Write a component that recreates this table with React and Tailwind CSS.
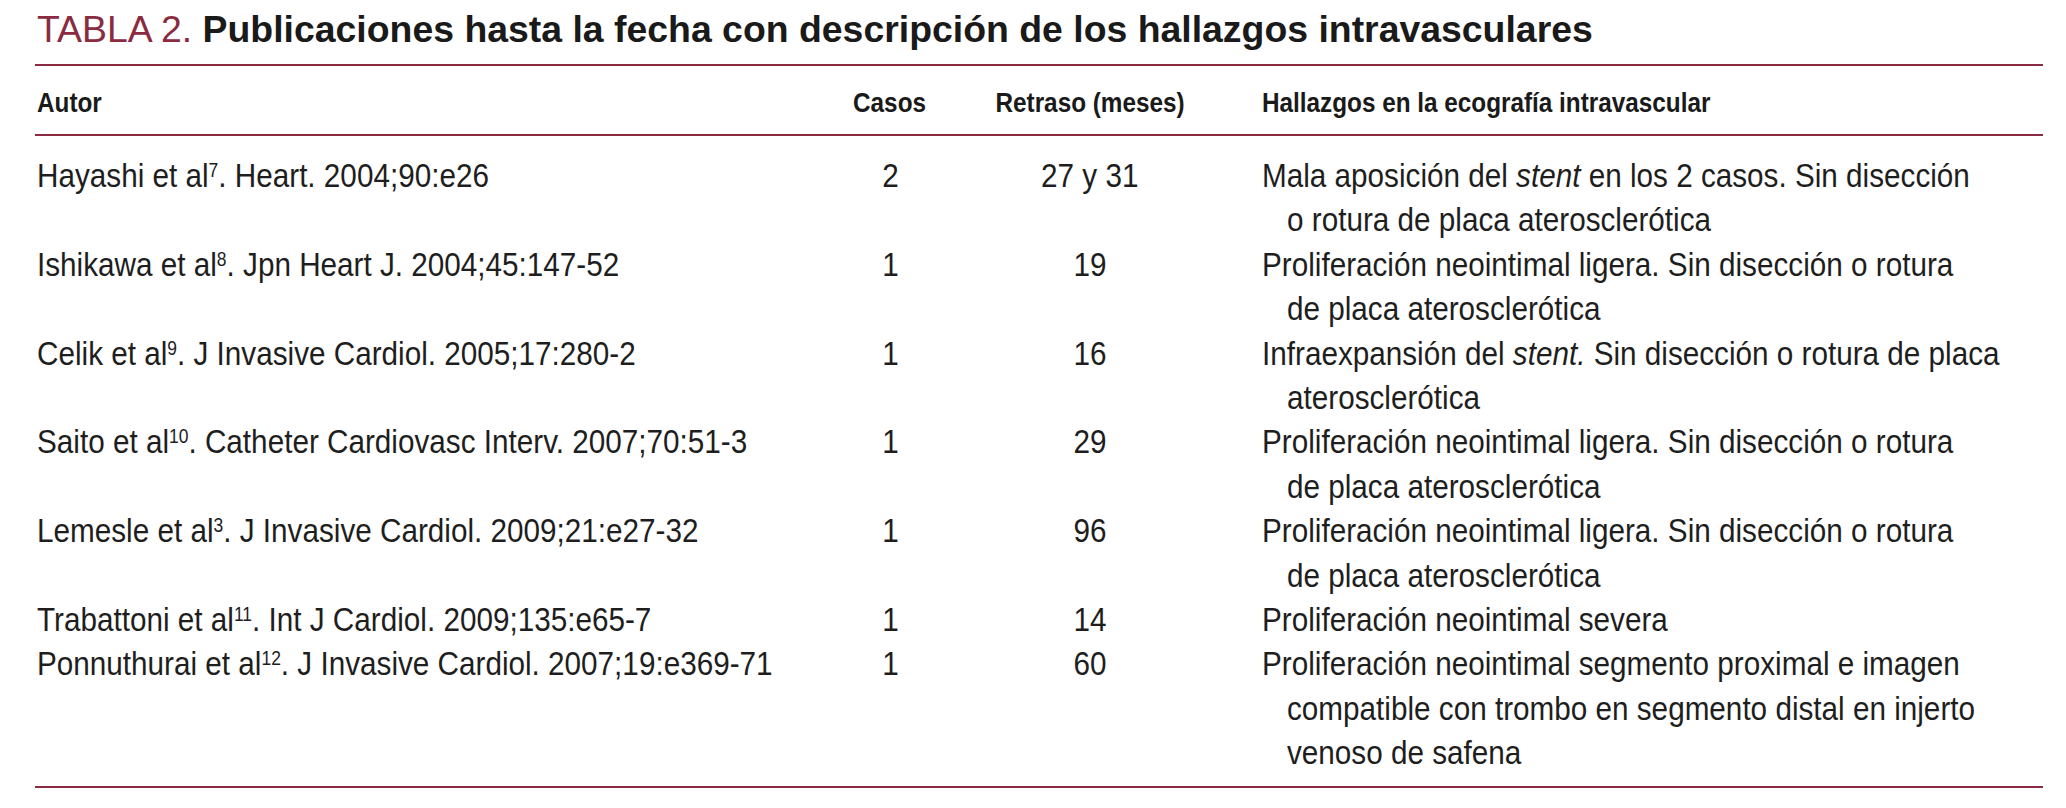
import React from 'react';

const rows = [
  { author: 'Hayashi et al', ref: '7', journal: '. Heart. 2004;90:e26', casos: '2', retraso: '27 y 31',
    desc: [['Mala aposición del ', { i: 'stent' }, ' en los 2 casos. Sin disección'], ['o rotura de placa aterosclerótica']] },
  { author: 'Ishikawa et al', ref: '8', journal: '. Jpn Heart J. 2004;45:147-52', casos: '1', retraso: '19',
    desc: [['Proliferación neointimal ligera. Sin disección o rotura'], ['de placa aterosclerótica']] },
  { author: 'Celik et al', ref: '9', journal: '. J Invasive Cardiol. 2005;17:280-2', casos: '1', retraso: '16',
    desc: [['Infraexpansión del ', { i: 'stent.' }, ' Sin disección o rotura de placa'], ['aterosclerótica']] },
  { author: 'Saito et al', ref: '10', journal: '. Catheter Cardiovasc Interv. 2007;70:51-3', casos: '1', retraso: '29',
    desc: [['Proliferación neointimal ligera. Sin disección o rotura'], ['de placa aterosclerótica']] },
  { author: 'Lemesle et al', ref: '3', journal: '. J Invasive Cardiol. 2009;21:e27-32', casos: '1', retraso: '96',
    desc: [['Proliferación neointimal ligera. Sin disección o rotura'], ['de placa aterosclerótica']] },
  { author: 'Trabattoni et al', ref: '11', journal: '. Int J Cardiol. 2009;135:e65-7', casos: '1', retraso: '14',
    desc: [['Proliferación neointimal severa']] },
  { author: 'Ponnuthurai et al', ref: '12', journal: '. J Invasive Cardiol. 2007;19:e369-71', casos: '1', retraso: '60',
    desc: [['Proliferación neointimal segmento proximal e imagen'], ['compatible con trombo en segmento distal en injerto'], ['venoso de safena']] },
];

const sans = { fontFamily: '"Liberation Sans", Arial, sans-serif' };

// condensed look: Arial Narrow is basically Arial squeezed horizontally
const Narrow = ({ children, center }) => (
  <span
    className={
      center
        ? 'inline-block whitespace-nowrap origin-center scale-x-[0.873]'
        : 'inline-block whitespace-nowrap origin-left scale-x-[0.873]'
    }
  >
    {children}
  </span>
);

const HeadCell = ({ children, center }) => (
  <span
    className={
      center
        ? 'inline-block whitespace-nowrap origin-center scale-x-[0.9]'
        : 'inline-block whitespace-nowrap origin-left scale-x-[0.9]'
    }
  >
    {children}
  </span>
);

function Line({ parts, indent }) {
  return (
    <div className={indent ? 'pl-[25px]' : ''}>
      <Narrow>
        {parts.map((p, k) => (typeof p === 'string' ? <span key={k}>{p}</span> : <em key={k} className="italic">{p.i}</em>))}
      </Narrow>
    </div>
  );
}

export default function App() {
  return (
    <div className="bg-white w-[2066px] h-[808px] overflow-hidden pl-[35px] text-[#1e1e1e]" style={sans}>
      <div className="w-[2008px]">
        <h1 className="pt-[11px] text-[37.4px] leading-[37px] pl-[2px] whitespace-nowrap">
          <span className="text-[#8a2b41] font-normal">TABLA 2. </span>
          <span className="font-bold text-[#1a1a1a]">Publicaciones hasta la fecha con descripción de los hallazgos intravasculares</span>
        </h1>
        <div className="mt-[16px] h-[2px] bg-[#8a2b41]" />

        <div className="grid grid-cols-[795px_120px_280px_1fr] pt-[24px] pb-[17px] text-[27px] leading-[27px] font-bold text-[#1a1a1a]">
          <div className="pl-[2px]"><HeadCell>Autor</HeadCell></div>
          <div className="text-center"><HeadCell center>Casos</HeadCell></div>
          <div className="text-center"><HeadCell center>Retraso (meses)</HeadCell></div>
          <div className="pl-[32px]"><HeadCell>Hallazgos en la ecografía intravascular</HeadCell></div>
        </div>
        <div className="h-[2px] bg-[#8a2b41]" />

        <div className="pt-[17px] pb-[11px] text-[34px] leading-[44.4px]">
          {rows.map((r, idx) => (
            <div key={idx} className="grid grid-cols-[795px_120px_280px_1fr]">
              <div className="pl-[2px]">
                <Narrow>
                  {r.author}
                  <sup className="text-[20px]">{r.ref}</sup>
                  {r.journal}
                </Narrow>
              </div>
              <div className="text-center"><Narrow center>{r.casos}</Narrow></div>
              <div className="text-center"><Narrow center>{r.retraso}</Narrow></div>
              <div className="pl-[32px]">
                {r.desc.map((parts, j) => (
                  <Line key={j} parts={parts} indent={j > 0} />
                ))}
              </div>
            </div>
          ))}
        </div>
        <div className="h-[2px] bg-[#8a2b41]" />
      </div>
    </div>
  );
}
